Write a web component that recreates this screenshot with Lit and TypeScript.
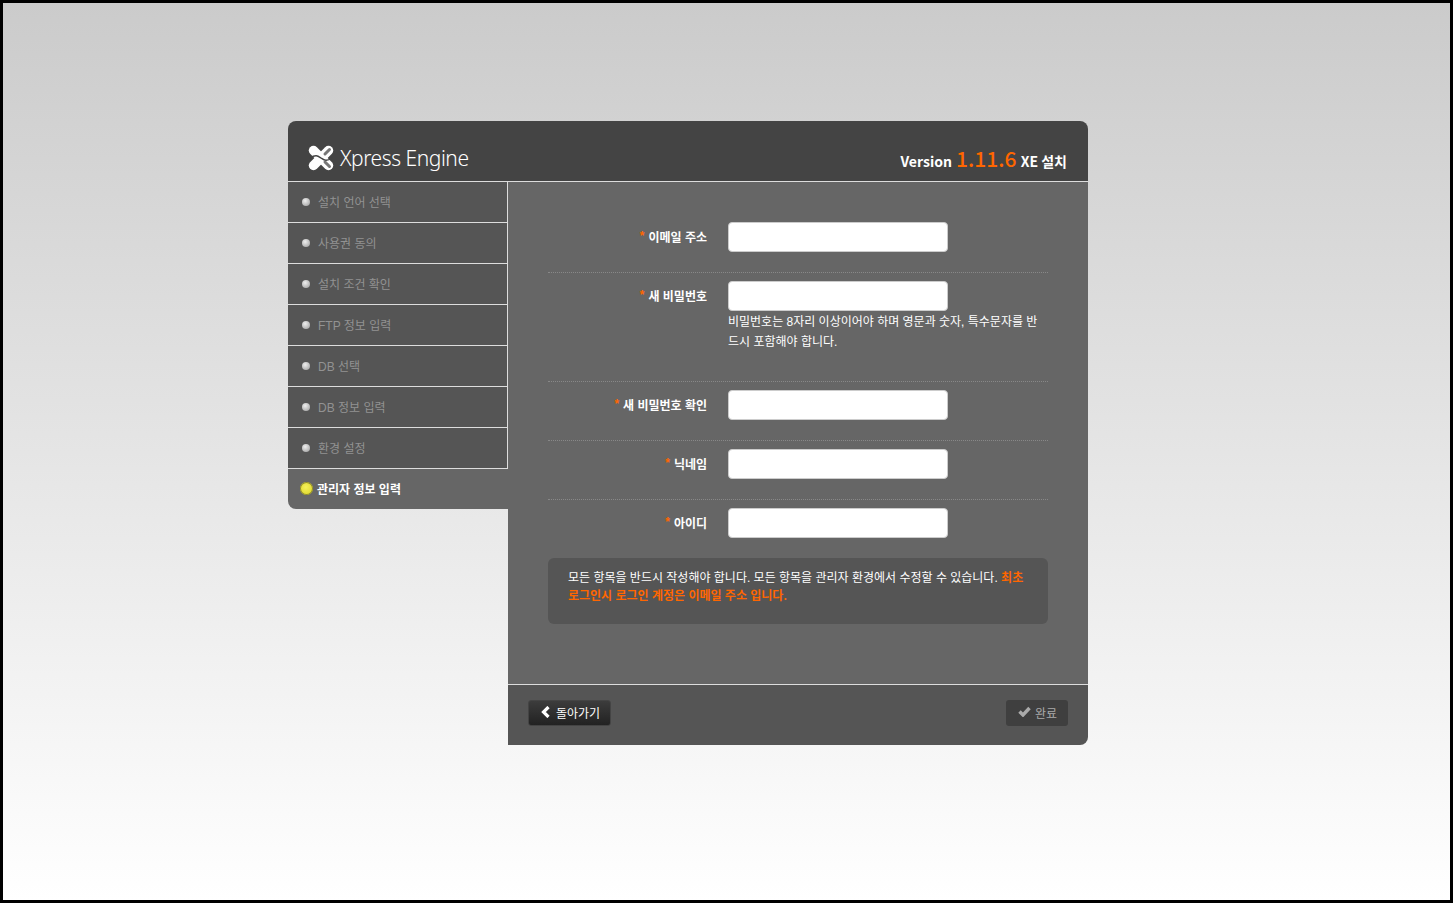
import { LitElement, html, css } from "lit";
import { customElement } from "lit/decorators.js";

const steps = ["설치 언어 선택", "사용권 동의", "설치 조건 확인", "FTP 정보 입력", "DB 선택", "DB 정보 입력", "환경 설정"];

@customElement("app-root")
export class AppRoot extends LitElement {
  static styles = css`
    :host { display: block; font-family: "Liberation Sans", "Noto Sans CJK KR", sans-serif; font-size: 12px; }
    * { box-sizing: border-box; }
    .page { height: 903px; border: 3px solid #000; background: linear-gradient(#cbcbcb, #ffffff); padding: 118px 0 0 285px; }
    .card { width: 800px; }
    .head { height: 61px; background: #444; border-radius: 8px 8px 0 0; border-bottom: 1px solid #ddd; display: flex; align-items: flex-end; justify-content: space-between; padding: 0 21px 8px 20px; }
    .brand { display: flex; align-items: center; gap: 6px; margin-bottom: 1px; color: #fff; font-family: "Noto Sans", sans-serif; font-size: 21px; font-weight: 300; line-height: 28px; letter-spacing: -0.45px; }
    .ver { color: #fff; font-family: "Noto Sans CJK KR", sans-serif; font-size: 14px; font-weight: 700; line-height: 24px; }
    .ver b { color: #f60; font-size: 21px; font-weight: 500; margin: 0 1px; }
    .body { display: flex; align-items: flex-start; }
    nav { width: 220px; }
    .step { height: 41px; display: flex; align-items: center; gap: 8px; padding-left: 14px; padding-bottom: 1px; background: #555; color: #929292; border-right: 1px solid #ddd; border-bottom: 1px solid #ddd; }
    .dot { width: 8px; height: 8px; border-radius: 50%; background: radial-gradient(circle at 40% 35%, #eee, #999); }
    .step.on { height: 40px; background: #666; border: 0; border-radius: 0 0 0 8px; color: #fff; font-weight: 700; padding-left: 12px; gap: 4px; }
    .step.on .dot { width: 13px; height: 13px; background: radial-gradient(circle at 45% 40%, #f4f05a, #d8d020); box-shadow: 0 0 0 1px #8d8a2c inset; }
    .main { width: 580px; }
    .form { height: 502px; background: #666; padding: 26px 40px 0; }
    .row { display: flex; padding: 8px 0 0; border-top: 1px dotted #888; }
    .row:first-child { border-top: 0; padding-top: 14px; }
    label { width: 160px; height: 30px; display: flex; justify-content: flex-end; align-items: center; gap: 4px; padding: 0 1px 2px 0; color: #fff; font-weight: 700; }
    label i { color: #f60; font-style: normal; }
    .field { width: 320px; padding-left: 20px; margin-right: -20px; }
    .input { width: 220px; height: 30px; background: #fff; border: 1px solid #ccc; border-radius: 4px; }
    .hint { color: #fff; line-height: 20px; width: 312px; margin-top: 1px; }
    .r0 { height: 64px; } .r1 { height: 109px; } .r2 { height: 59px; } .r3 { height: 59px; } .r4 { height: 59px; }
    .note { height: 66px; border-radius: 6px; background: #555; color: #fff; padding: 11px 20px 0; line-height: 18px; }
    .note b { color: #f60; font-weight: 700; }
    .foot { height: 61px; background: #555; border-top: 1px solid #ddd; border-radius: 0 0 8px 0; display: flex; justify-content: space-between; align-items: center; padding: 0 20px 4px; }
    .btn { height: 26px; display: flex; align-items: center; border-radius: 3px; white-space: nowrap; }
    .btn span { padding-bottom: 2px; }
    .btn svg { margin-bottom: 2px; flex: none; }
    .back { gap: 5px; padding: 0 0 0 12px; width: 83px; background: linear-gradient(#3c3c3c, #222); border: 1px solid #444; color: #fff; }
    .done { gap: 4px; padding: 0 11px 0 12px; background: #3f3f3f; color: #aaa; }
    .done svg { margin-bottom: 4px; }
    svg { display: block; }
  `;

  render() {
    const rows: [string, string][] = [["이메일 주소", "r0"], ["새 비밀번호", "r1"], ["새 비밀번호 확인", "r2"], ["닉네임", "r3"], ["아이디", "r4"]];
    return html`
      <div class="page">
        <div class="card">
          <div class="head">
            <div class="brand">
              <svg width="26" height="26" viewBox="0 0 26 26" fill="none" stroke-linecap="round">
                <path d="M5.5 5.5 L20.5 20.5" stroke="#fff" stroke-width="9.5"/>
                <path d="M20.5 5.5 L5.5 20.5" stroke="#fff" stroke-width="9.5"/>
                <path d="M2 13 C8 9 10 11 13 13 C16 15 18 17 24 13" stroke="#444" stroke-width="1.4"/>
                <path d="M21.5 4.5 L17 9" stroke="#777" stroke-width="3"/>
                <path d="M21.5 21.5 L17 17" stroke="#777" stroke-width="3"/>
              </svg>
              <span>Xpress Engine</span>
            </div>
            <div class="ver">Version <b>1.11.6</b> XE 설치</div>
          </div>
          <div class="body">
            <nav>
              ${steps.map((s) => html`<div class="step"><span class="dot"></span>${s}</div>`)}
              <div class="step on"><span class="dot"></span>관리자 정보 입력</div>
            </nav>
            <div class="main">
              <div class="form">
                ${rows.map(([t, c]) => html`
                  <div class="row ${c}">
                    <label><i>*</i>${t}</label>
                    <div class="field">
                      <div class="input"></div>
                      ${c === "r1" ? html`<div class="hint">비밀번호는 8자리 이상이어야 하며 영문과 숫자, 특수문자를 반드시 포함해야 합니다.</div>` : ""}
                    </div>
                  </div>`)}
                <div class="note">모든 항목을 반드시 작성해야 합니다. 모든 항목을 관리자 환경에서 수정할 수 있습니다. <b>최초 로그인시 로그인 계정은 이메일 주소 입니다.</b></div>
              </div>
              <div class="foot">
                <div class="btn back">
                  <svg width="10" height="12" viewBox="0 0 10 12"><path d="M7.5 1 L2.5 6 L7.5 11" fill="none" stroke="#fff" stroke-width="3.2"/></svg>
                  <span>돌아가기</span>
                </div>
                <div class="btn done">
                  <svg width="13" height="11" viewBox="0 0 13 11"><path d="M1.5 5.5 L5 9 L11.5 2" fill="none" stroke="#aaa" stroke-width="3.4"/></svg>
                  <span>완료</span>
                </div>
              </div>
            </div>
          </div>
        </div>
      </div>
    `;
  }
}
